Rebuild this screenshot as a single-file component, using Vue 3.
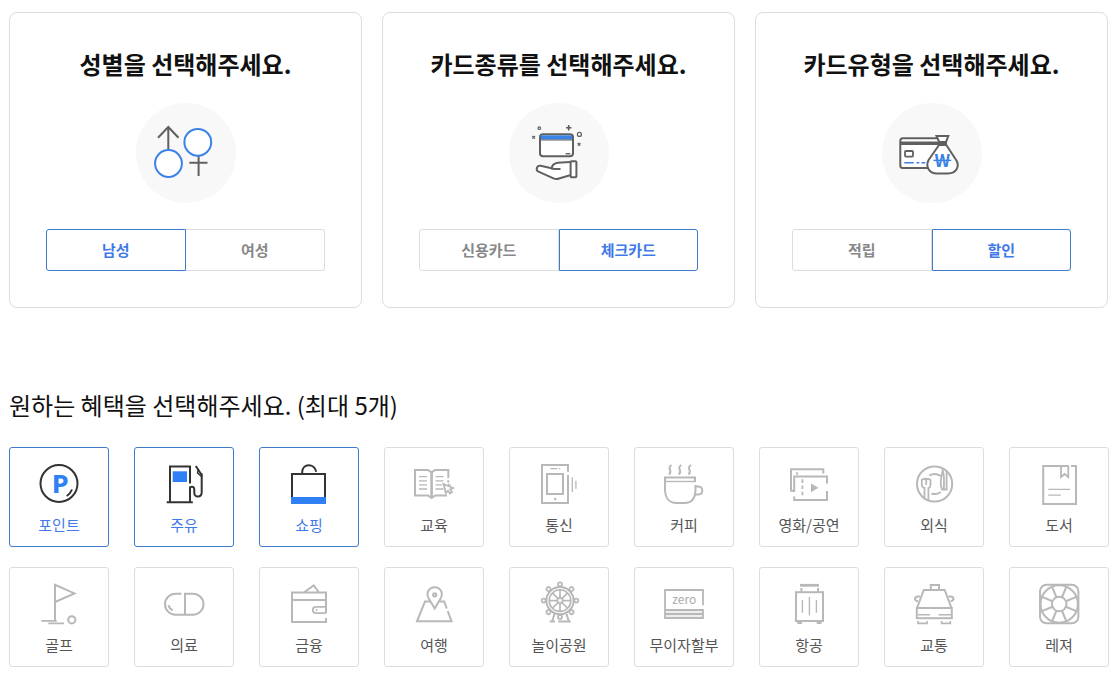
<script setup>
import { ref } from 'vue'

const groups = ref([
  { id: 'gender', title: '성별을 선택해주세요.', options: ['남성', '여성'], selected: 0 },
  { id: 'kind', title: '카드종류를 선택해주세요.', options: ['신용카드', '체크카드'], selected: 1 },
  { id: 'type', title: '카드유형을 선택해주세요.', options: ['적립', '할인'], selected: 1 },
])

const MAX = 5
const benefits = ref(
  [
    ['point', '포인트'], ['fuel', '주유'], ['shopping', '쇼핑'],
    ['education', '교육'], ['telecom', '통신'], ['coffee', '커피'],
    ['movie', '영화/공연'], ['dining', '외식'], ['book', '도서'],
    ['golf', '골프'], ['medical', '의료'], ['finance', '금융'],
    ['travel', '여행'], ['park', '놀이공원'], ['zero', '무이자할부'],
    ['flight', '항공'], ['traffic', '교통'], ['leisure', '레져'],
  ].map(([id, label], i) => ({ id, label, on: i < 3 }))
)

function toggle(b) {
  if (b.on || benefits.value.filter((x) => x.on).length < MAX) b.on = !b.on
}

const wheel = [0, 45, 90, 135, 180, 225, 270, 315]
</script>

<template>
  <main class="page">
    <div class="cards">
      <section v-for="g in groups" :key="g.id" class="card">
        <h2 :id="g.id" class="card-title">{{ g.title }}</h2>
        <svg class="emblem" viewBox="0 0 100 100" aria-hidden="true">
          <circle cx="50" cy="50" r="50" fill="#f8f8f8" />
          <g v-if="g.id === 'gender'" fill="none" stroke="#606060" stroke-width="2">
            <path d="M32.3 24V47M22 34.7L32.3 24L42.5 34.7M62.6 53V73M53.3 59.8H71.5" />
            <g fill="#fff" stroke="#3b82e6">
              <circle cx="32.5" cy="60.5" r="13.4" />
              <circle cx="61.8" cy="39.3" r="13.4" />
            </g>
          </g>
          <g v-else-if="g.id === 'kind'" fill="none" stroke="#606060" stroke-width="2">
            <rect x="31" y="31.3" width="33" height="22" rx="3" fill="#fff" />
            <path d="M32 32.3H63V36.6H32Z" fill="#3b82e6" stroke="none" />
            <path d="M32 37H63" stroke-width="1" />
            <path d="M56.7 50.7H61.3" stroke-width="1.4" />
            <g stroke-width="1.2">
              <circle cx="30.3" cy="25.2" r="1.3" />
              <circle cx="70.4" cy="31.4" r="2" />
              <path d="M23.3 33L26 35.7M26 33L23.3 35.7M68.7 40L71.4 42.7M71.4 40L68.7 42.7" />
              <path d="M59.7 22V27.4M57 24.7H62.4" stroke-width="1.6" />
            </g>
            <path
              d="M61 59L49 59.8C45 60.2 43 62.5 42.7 65.2L31.5 62.8C27.5 62.4 26.5 67 29.5 68.6L44.5 75.3Q47.2 76.6 50 75.5L61 72.2"
              fill="#fff" stroke-linejoin="round"
            />
            <path d="M42.2 65.4L45.5 66H51.5" />
            <rect x="61.6" y="58.2" width="5.8" height="16" rx="1" fill="#fff" />
          </g>
          <g v-else fill="none" stroke="#606060" stroke-width="2">
            <rect x="18.3" y="35.2" width="42" height="29.8" rx="2.5" fill="#fff" />
            <path d="M18.3 40.3H62" stroke-width="3.6" />
            <rect x="23" y="48" width="8" height="5.6" rx="1" stroke-width="1.8" />
            <path d="M22.3 59.8H31.7M34.5 59.8H37.3M39.5 59.8H43.3" stroke="#3b82e6" stroke-width="1.6" />
            <path d="M54.5 33H66.3L64 39H57.2Z" fill="#fff" />
            <path
              d="M57 42L46.6 57C43.5 63 46.5 70.4 55 70.4H66C74.5 70.4 77.5 63.5 74.6 57.8L64.3 42Z"
              fill="#fff" stroke-linejoin="round"
            />
            <path d="M56.3 40.5H65" stroke-width="4.4" />
            <text class="won" x="60.4" y="64">W</text>
            <path d="M51.5 57.4H69.3" stroke="#3b82e6" stroke-width="1.4" />
          </g>
        </svg>
        <div class="segment" role="group" :aria-labelledby="g.id">
          <button
            v-for="(o, i) in g.options"
            :key="o"
            type="button"
            class="option"
            :class="{ active: g.selected === i }"
            :aria-pressed="g.selected === i"
            @click="g.selected = i"
          >{{ o }}</button>
        </div>
      </section>
    </div>

    <h2 class="heading">원하는 혜택을 선택해주세요. (최대 5개)</h2>

    <div class="tiles">
      <button
        v-for="b in benefits"
        :key="b.id"
        type="button"
        class="tile"
        :class="{ active: b.on }"
        :aria-pressed="b.on"
        @click="toggle(b)"
      >
        <svg class="icon" viewBox="20 12 60 50" aria-hidden="true">
          <g v-if="b.id === 'point'">
            <circle cx="50" cy="36.5" r="18.5" />
            <path d="M63 42.5Q61.5 46.5 57.7 49" />
            <text class="p-mark" x="51.3" y="46">P</text>
          </g>
          <g v-else-if="b.id === 'fuel'">
            <path d="M36 55V19.5H56V36.5M56 39.5V55M32.7 55.2H58.8" />
            <path class="accent" d="M38.7 24.3H53V35H38.7Z" />
            <path d="M56 41.5Q56.3 39.5 58.3 39.8Q60.3 40 60.3 43V46Q60.5 49.5 64 49.5Q67.5 49.5 67.7 45.5V28L61.8 19" />
            <path d="M64.5 22L63.5 26L67.5 29.5L67.7 26" stroke-width="1.5" />
          </g>
          <g v-else-if="b.id === 'shopping'">
            <path d="M33 57V27H66V57M43.2 27V25C43.5 16 55.5 16 57.2 24.8" />
            <path class="accent" d="M32 50H67V57H32Z" />
          </g>
          <g v-else-if="b.id === 'education'">
            <path d="M47.6 25.3L44 23H31V48.5H44L47.6 51L51.2 48.5H63M47.6 25.3L51.2 23H64.3V31M64.3 33.2V35.5" />
            <path d="M47.6 25V51" stroke-width="2.6" />
            <path d="M35 29.7L43 29.7M35 33.8H43M35 37.9H43M35 42H43M51.5 29.7H59.5M51.5 33.8H59.5M51.5 37.9H58M51.5 42H59.5" stroke-width="1.3" />
            <path d="M59.5 37L61.8 46L64 43.8L66 46.5L68 45L66.2 42.4L69 41Z" stroke-width="1.8" />
            <path d="M64.5 36.5V39.5M66.5 37.5L65.5 39.5" stroke-width="1.3" />
          </g>
          <g v-else-if="b.id === 'telecom'">
            <path d="M59 24.7V18H33V56H59V28" />
            <rect x="38" y="27" width="16" height="20" />
            <path d="M41.3 21.7H48.3M50 21.7H51.2" stroke-width="1.3" />
            <path d="M63.3 30.3V45M66.9 33.7V41.7" stroke-width="1.3" />
            <circle class="dot" cx="46.2" cy="52" r="1.2" />
          </g>
          <g v-else-if="b.id === 'coffee'">
            <path d="M61 35V30.4H31V42C31 51 35.5 56 42.5 56H50.5C57.5 56 61.5 51 61.5 42V38" />
            <path d="M31 34.5H62" stroke-width="1.4" />
            <path d="M61.5 39.5H64.5C69.5 39.8 69.5 47.3 64.5 47.5H61" />
            <path d="M37.5 18C32 21.5 39.5 23.5 35 27.5M47.3 18C41.8 21.5 49.3 23.5 44.8 27.5M57 18C51.5 21.5 59 23.5 54.5 27.5" />
          </g>
          <g v-else-if="b.id === 'movie'">
            <path d="M35 43.7H32V22.3H64.3V26.5" />
            <path d="M38 25V28" stroke-width="1.6" />
            <path d="M35.2 45V29.5H68V36.5M68 44V53H35.2V49.5" />
            <path d="M43.4 32.3V48.5" stroke-width="1.8" stroke-dasharray="3.6 2.6" />
            <path class="dot" d="M52 36.5L59.5 40.8L52 45.3Z" />
          </g>
          <g v-else-if="b.id === 'dining'">
            <circle cx="50.6" cy="37" r="17.6" />
            <path d="M45.3 28.6Q50.5 25.4 56.7 28.8M47.5 46.5Q52 48.2 56.8 45" />
            <path d="M37.8 32.2V38Q38 40.5 40.5 41V52M46.5 32.2V38Q46.3 40.5 44.4 41V54M42.2 32.2V38M37.8 32.5Q42.2 31 46.5 32.5" stroke-width="1.8" />
            <path d="M58.7 21.5V24Q55.2 35 58 42.5H62.6V24.5M59 24C60.3 30 60.2 36 59.8 42" stroke-width="1.8" />
          </g>
          <g v-else-if="b.id === 'book'">
            <path d="M59.8 19H34.2V57H67V19H62" />
            <path d="M52 19V30L55.6 27L59.3 30V19" stroke-width="1.8" />
            <path d="M39.3 42.4H61M39.3 48.1H51.8" stroke-width="1.4" />
          </g>
          <g v-else-if="b.id === 'golf'">
            <path d="M46 54V17.8L65.5 26.4L46 35" />
            <path d="M32.3 53.8H47.8M39.3 56.4H55" stroke-width="1.7" />
            <circle cx="62.8" cy="52.8" r="3.6" />
          </g>
          <g v-else-if="b.id === 'medical'">
            <path d="M47.5 26.7H41.5A10.4 10.4 0 0 0 41.5 47.7H59A10.4 10.4 0 0 0 59 26.7H51V47.7" />
            <path d="M34.5 38.3Q35.3 41.8 38.8 43.2" />
          </g>
          <g v-else-if="b.id === 'finance'">
            <path d="M67 46V25.5H33V55H67V51M33 33H67M45.5 25L54.7 18.4L59.6 25" />
            <path d="M67 39.8H57A3.2 3.2 0 0 0 57 46.2H67" stroke-width="1.8" />
            <circle class="dot" cx="57.7" cy="43" r="1" />
          </g>
          <g v-else-if="b.id === 'travel'">
            <path d="M46 34.5H41L33 54.3H67.5L63.7 44M62.8 41.5L60.2 34.5H55.5" />
            <path d="M50.7 41.5L44.6 31.3C41.5 25.5 45.4 20.3 50.7 20.3S59.8 25.5 56.7 31.3Z" />
            <circle cx="50.7" cy="27.8" r="1.6" />
          </g>
          <g v-else-if="b.id === 'park'">
            <circle cx="51" cy="33.6" r="13.6" />
            <circle cx="51" cy="33.6" r="10.8" stroke-width="1.6" />
            <circle cx="51" cy="33.6" r="2.7" stroke-width="1.8" />
            <g v-for="a in wheel" :key="a" :transform="`rotate(${a} 51 33.6)`" stroke-width="1.7">
              <path d="M51 22.8V30.8" />
              <circle class="cabin" cx="51" cy="17.3" r="2" />
            </g>
            <path d="M45.5 47L43.3 54M57.5 47L59.7 54M40.7 54.5H46M49.3 54.5H61.7" />
          </g>
          <g v-else-if="b.id === 'zero'">
            <path class="band" d="M31 43H69V51H31Z" />
            <path d="M69 38.3V23H31V51H69V43H31M31 47H69" stroke-width="1.8" />
            <text class="zero-mark" x="50.2" y="36.8">zero</text>
          </g>
          <g v-else-if="b.id === 'flight'">
            <path d="M41 18.3H60" stroke-width="2.8" />
            <path d="M42.4 21V25M59 21V25" />
            <rect x="37" y="25.2" width="27" height="28.8" />
            <path d="M43.4 33V45.7M50.4 30V48.5M57.4 33V45.7" stroke-width="1.4" />
            <path d="M38.3 56H43M57.7 56H62.5" />
          </g>
          <g v-else-if="b.id === 'traffic'">
            <path d="M46.8 23V18H55V23M33 41L39.8 23H60.7L67.5 41" />
            <rect x="32.8" y="41" width="35" height="10.2" />
            <path d="M34 47.7H46M54.5 47.7H67" stroke-width="1.4" />
            <path d="M36 29.5H34C30 29.8 30 33.8 34 34.2M64.5 29.5H66.5C70.5 29.8 70.5 33.8 66.5 34.2" />
            <path d="M34 54V56.3H43V54M57.6 54V56.3H66.3V54" stroke-width="1.7" />
          </g>
          <g v-else>
            <rect x="31" y="17.8" width="38.4" height="38.4" rx="6.5" />
            <circle cx="50.2" cy="37" r="18.7" />
            <circle cx="50.2" cy="37" r="7.3" />
            <path
              v-for="a in wheel" :key="a"
              :transform="`rotate(${a + 22.5} 50.2 37)`"
              d="M50.2 18.5V29.7"
            />
          </g>
        </svg>
        <span class="label">{{ b.label }}</span>
      </button>
    </div>
  </main>
</template>

<style>
body {
  background: #fff;
}
</style>

<style scoped>
.page {
  padding: 12px 11px 10px 9px;
  color: #111;
  font-family: "Noto Sans CJK KR", "Noto Sans", sans-serif;
}
.cards {
  display: grid;
  grid-template-columns: repeat(3, 1fr);
  gap: 20px;
  padding-right: 1px;
}
.card {
  display: flex;
  flex-direction: column;
  align-items: center;
  padding: 33px 36px 36px;
  border: 1px solid #ddd;
  border-radius: 8px;
}
.card-title {
  margin: 0 0 21px;
  font-size: 24px;
  line-height: 36px;
  font-weight: 700;
}
.emblem {
  width: 100px;
  height: 100px;
}
.segment {
  display: grid;
  grid-template-columns: 1fr 1fr;
  width: 100%;
  margin-top: 26px;
}
.option {
  padding: 9px 0;
  border: 1px solid #ddd;
  border-radius: 3px 0 0 3px;
  background: #fff;
  color: #888;
  font-family: inherit;
  font-size: 15px;
  line-height: 22px;
  font-weight: 700;
  cursor: pointer;
}
.option + .option {
  border-left-width: 0;
  border-radius: 0 3px 3px 0;
}
.option.active,
.option + .option.active {
  border: 1px solid #407bcb;
  color: #417ae8;
}
.heading {
  margin: 79px 0 24px;
  font-size: 24px;
  line-height: 36px;
  font-weight: 400;
}
.tiles {
  display: grid;
  grid-template-columns: repeat(9, 1fr);
  gap: 20px 25px;
}
.tile {
  display: flex;
  flex-direction: column;
  align-items: center;
  gap: 5px;
  padding: 11px 0 10px;
  border: 1px solid #ddd;
  border-radius: 3px;
  background: #fff;
  color: #555;
  font-family: inherit;
  cursor: pointer;
}
.tile.active {
  border-color: #407bcb;
  color: #417ae8;
}
.icon {
  width: 60px;
  height: 50px;
  fill: none;
  stroke: #b8b8b8;
  stroke-width: 2;
}
.active .icon {
  stroke: #333;
}
.accent {
  fill: #2f80f5;
  stroke: none;
}
.dot {
  fill: #b8b8b8;
  stroke: none;
}
.cabin {
  fill: #fff;
}
.band {
  fill: #eee;
  stroke: none;
}
.won,
.p-mark,
.zero-mark {
  stroke: none;
  text-anchor: middle;
}
.won {
  fill: #3b82e6;
  font-size: 17px;
  font-weight: 700;
}
.p-mark {
  fill: #2f80f5;
  font-size: 24px;
  font-weight: 900;
}
.zero-mark {
  fill: #aaa;
  font-size: 12px;
}
.label {
  font-size: 15px;
  line-height: 22px;
  white-space: nowrap;
}
</style>
